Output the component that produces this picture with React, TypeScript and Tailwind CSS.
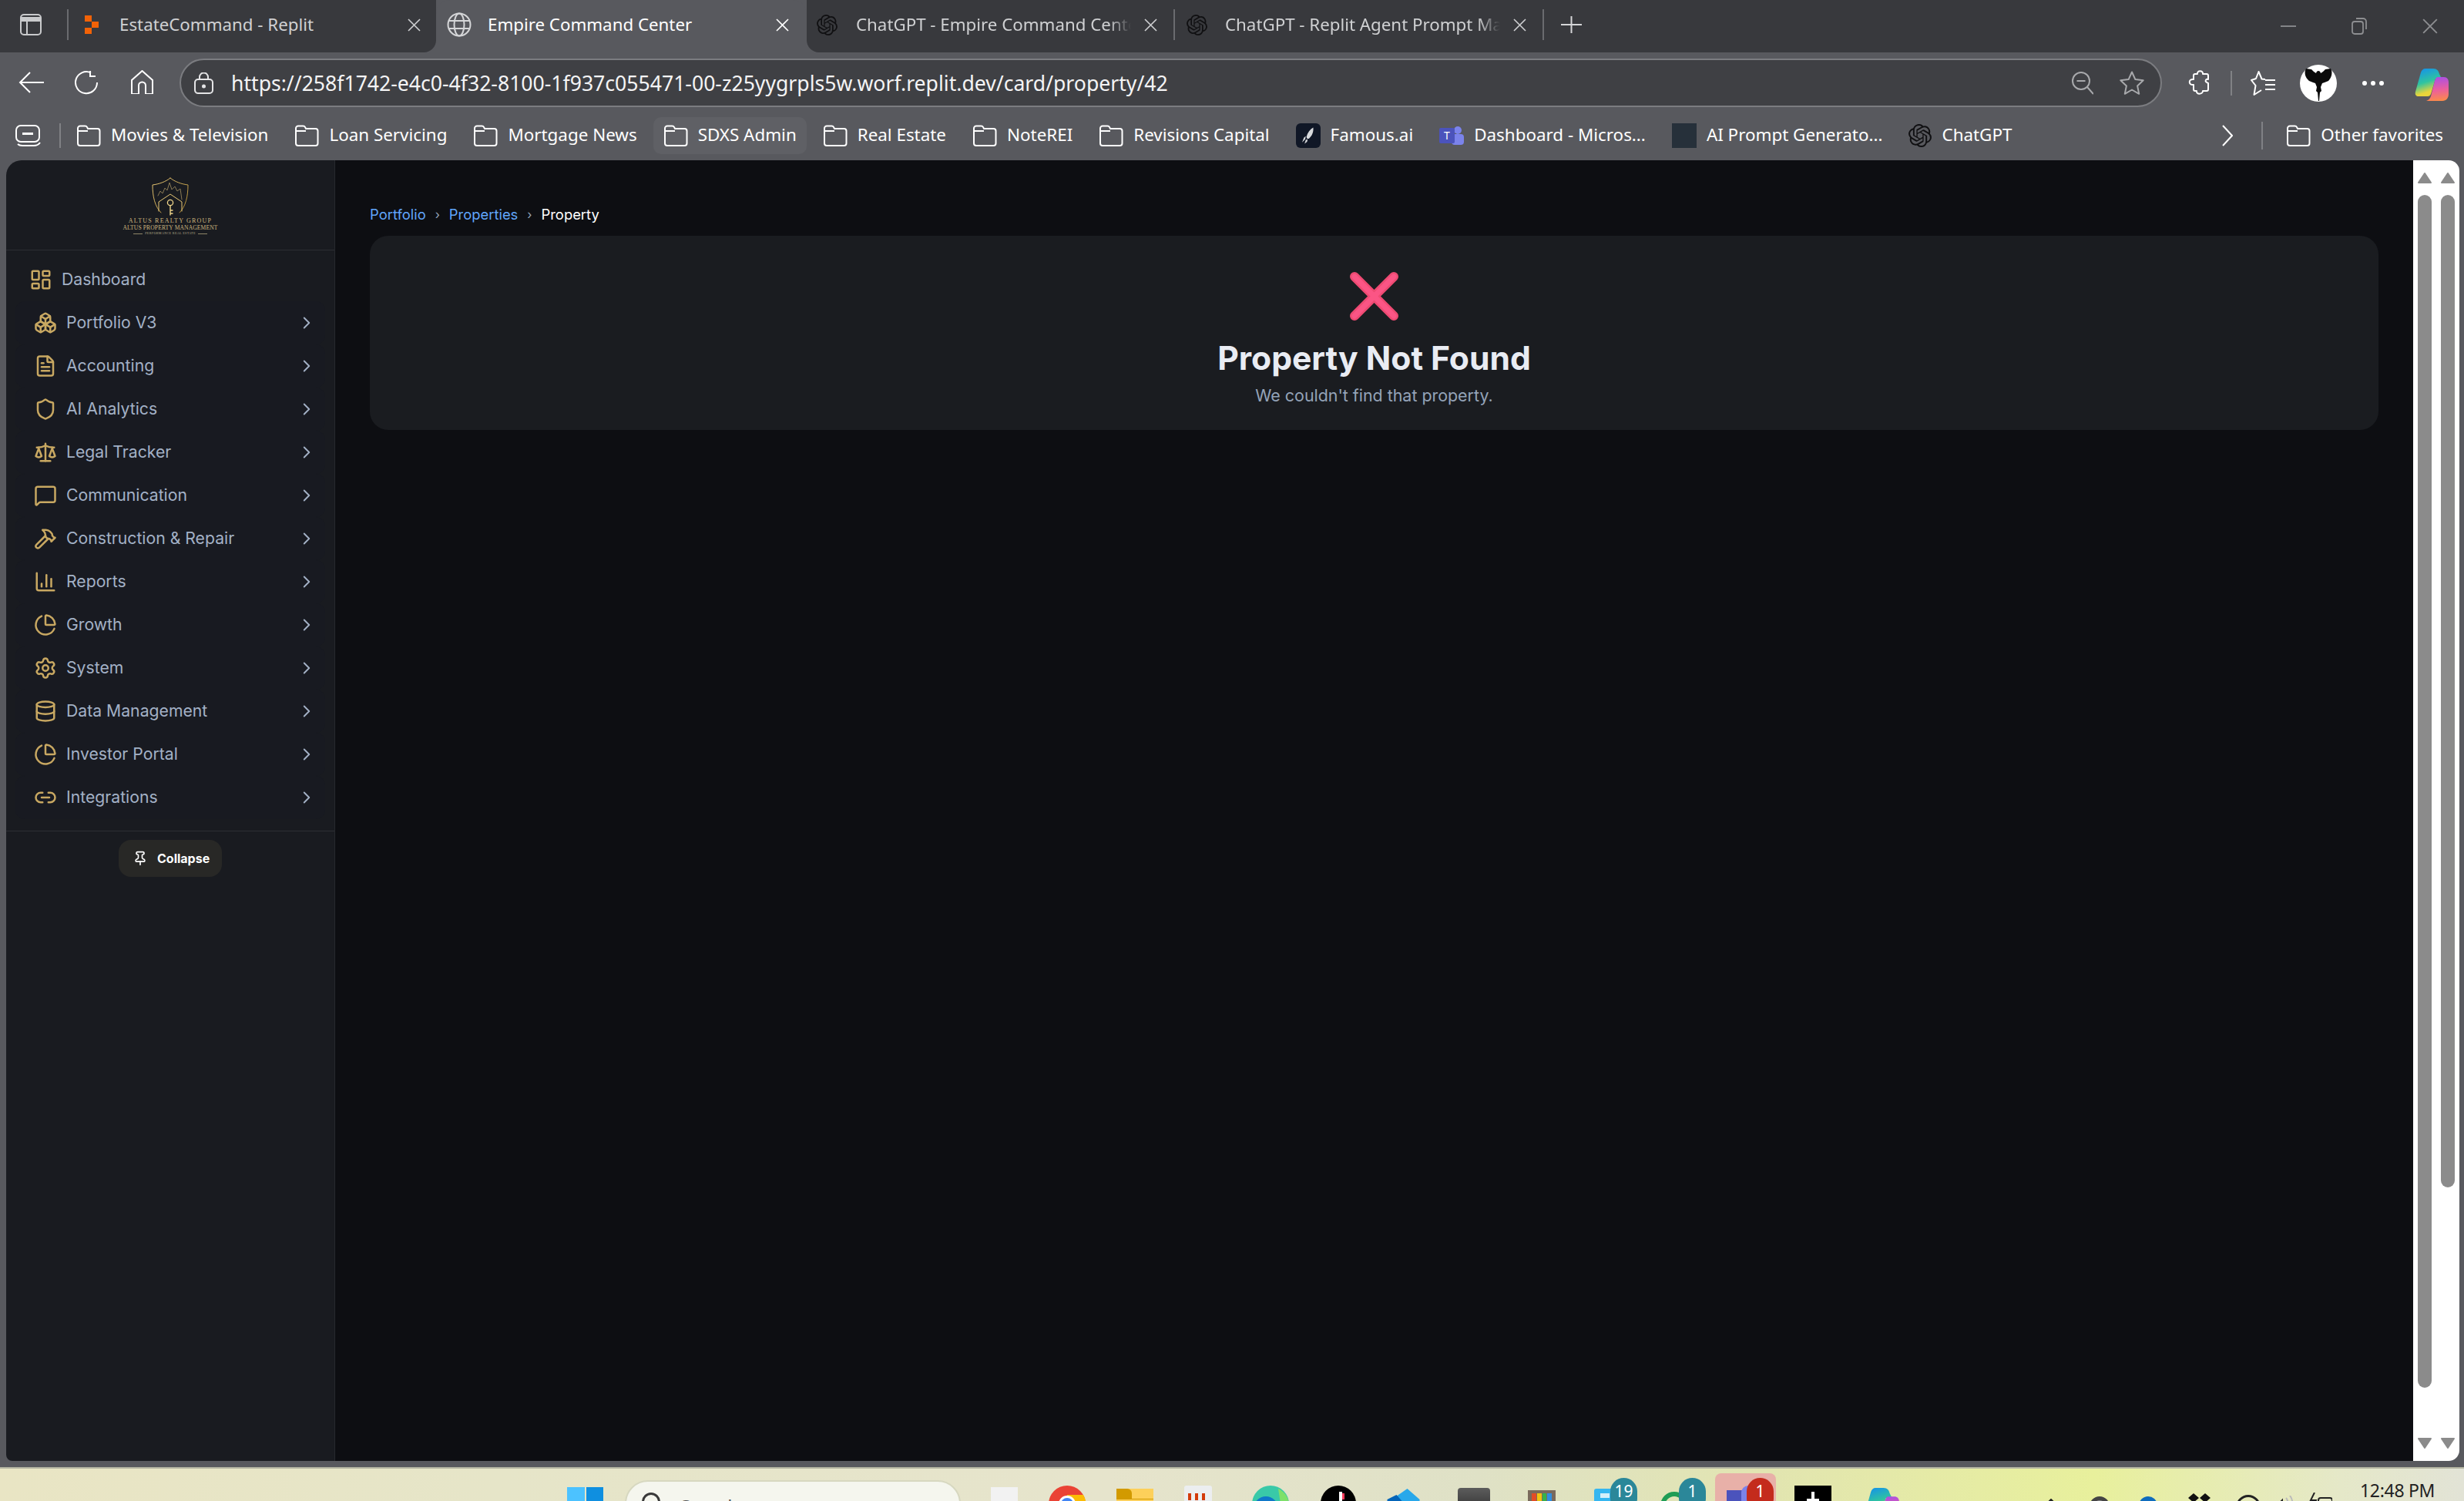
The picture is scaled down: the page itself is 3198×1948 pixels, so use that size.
import React from 'react';
import {
  LayoutDashboard, Boxes, FileText, Shield, Scale, MessageSquare, Hammer, ChartColumn,
  ChartPie, Settings, Database, Link2, ChevronRight, Pin,
} from 'lucide-react';
import { SiOpenai } from 'react-icons/si';

const uiFont = "font-['Noto_Sans',sans-serif]";

const navItems = [
  { label: 'Portfolio V3', icon: Boxes },
  { label: 'Accounting', icon: FileText },
  { label: 'AI Analytics', icon: Shield },
  { label: 'Legal Tracker', icon: Scale },
  { label: 'Communication', icon: MessageSquare },
  { label: 'Construction & Repair', icon: Hammer },
  { label: 'Reports', icon: ChartColumn },
  { label: 'Growth', icon: ChartPie },
  { label: 'System', icon: Settings },
  { label: 'Data Management', icon: Database },
  { label: 'Investor Portal', icon: ChartPie },
  { label: 'Integrations', icon: Link2 },
];

const CloseGlyph = ({ className = '' }: { className?: string }) => (
  <svg viewBox="0 0 17 17" className={className} fill="none" stroke="currentColor" strokeWidth="1.6">
    <path d="M1 1l15 15M16 1L1 16" />
  </svg>
);

const FolderIcon = () => (
  <svg viewBox="0 0 32 28" className="w-[32px] h-[28px] shrink-0" fill="none" stroke="#fff" strokeWidth="2">
    <path d="M2 24V4.5A3 3 0 0 1 5 1.5h6.5a3 3 0 0 1 2.6 1.6L15 5h12.5a3 3 0 0 1 3 3v16a3 3 0 0 1-3 3H5a3 3 0 0 1-3-3Z" />
    <path d="M2 8h13" />
  </svg>
);

const CopilotLogo = ({ className = '' }: { className?: string }) => (
  <svg viewBox="0 0 44 44" className={className}>
    <defs>
      <linearGradient id="cpA" x1="0.2" y1="0" x2="0.5" y2="1">
        <stop offset="0" stopColor="#1592ea" />
        <stop offset="0.5" stopColor="#2fc4a0" />
        <stop offset="0.85" stopColor="#e8d53b" />
      </linearGradient>
      <linearGradient id="cpB" x1="0.4" y1="0" x2="0.5" y2="1">
        <stop offset="0" stopColor="#a94fe6" />
        <stop offset="0.55" stopColor="#ec5f9c" />
        <stop offset="1" stopColor="#fb8a4b" />
      </linearGradient>
    </defs>
    <path d="M14 1h10c5 0 7 3 8 7l3 6H27l-6 20c-1 2-2 3-4 3H5c-3 0-5-2-4-6L8 6c1-3 3-5 6-5Z" fill="url(#cpA)" />
    <path d="M30 12h8c4 0 6 3 6 7v15c0 5-3 9-8 9H15c3-1 5-3 6-6l5-20c1-3 2-5 4-5Z" fill="url(#cpB)" />
  </svg>
);

const Bookmark = ({ label, icon, hover }: { label: string; icon?: React.ReactNode; hover?: boolean }) => (
  <div className={`relative flex items-center gap-[13px] h-[48px] ${hover ? 'before:absolute before:content-[""] before:-inset-x-[13px] before:inset-y-0 before:rounded-[10px] before:bg-[#5f6065]' : ''}`}>
    <span className="relative flex items-center">{icon ?? <FolderIcon />}</span>
    <span className="relative -mt-[2px] text-[22.4px] text-white whitespace-nowrap leading-none">{label}</span>
  </div>
);

function TabStrip() {
  return (
    <div className={`flex h-[68px] bg-[#58595e] text-[22.3px] ${uiFont}`}>
      <div className="flex items-center w-[566px] pb-[4px] bg-[#38393d] rounded-br-[16px] text-[#cfd0d2]">
        <svg viewBox="0 0 28 28" className="ml-[26px] w-[28px] h-[28px]" fill="none" stroke="#c9cacc" strokeWidth="2">
          <rect x="1" y="1" width="26" height="26" rx="4" />
          <path d="M1 7h26" strokeWidth="6" />
          <path d="M9 8v19" />
        </svg>
        <div className="ml-[33px] w-[2px] h-[40px] bg-[#6a6b6f]" />
        <svg viewBox="0 0 18 24" className="ml-[21px] w-[18px] h-[24px]" fill="#f26207">
          <path d="M0 0h9v8H0zM9 8h9v8H9zM0 16h9v8H0z" />
        </svg>
        <span className="ml-[27px] w-[374px] whitespace-nowrap">EstateCommand - Replit</span>
        <CloseGlyph className="w-[17px] h-[17px] text-[#cfd0d2]" />
      </div>
      <div className="flex items-center w-[481px] pb-[4px] bg-[#58595e] rounded-t-[18px] text-white">
        <svg viewBox="0 0 32 32" className="ml-[14px] w-[32px] h-[32px]" fill="none" stroke="#d5d6d8" strokeWidth="2">
          <circle cx="16" cy="16" r="14.5" />
          <ellipse cx="16" cy="16" rx="6.5" ry="14.5" />
          <path d="M2.5 11h27M2.5 21h27" />
        </svg>
        <span className="ml-[21px] w-[374px] whitespace-nowrap">Empire Command Center</span>
        <CloseGlyph className="w-[17px] h-[17px] text-white" />
      </div>
      <div className="flex flex-1 items-center pb-[4px] bg-[#38393d] rounded-bl-[16px] text-[#cfd0d2]">
        <SiOpenai className="ml-[13px] w-[27px] h-[27px] text-[#101012] shrink-0" />
        <span className="ml-[24px] w-[357px] overflow-hidden whitespace-nowrap [mask-image:linear-gradient(to_right,black_92%,transparent)]">ChatGPT - Empire Command Center</span>
        <CloseGlyph className="ml-[17px] w-[17px] h-[17px] text-[#cfd0d2]" />
        <div className="ml-[21px] w-[2px] h-[40px] bg-[#6a6b6f]" />
        <SiOpenai className="ml-[15px] w-[27px] h-[27px] text-[#101012] shrink-0" />
        <span className="ml-[23px] w-[357px] overflow-hidden whitespace-nowrap [mask-image:linear-gradient(to_right,black_92%,transparent)]">ChatGPT - Replit Agent Prompt Maker</span>
        <CloseGlyph className="ml-[17px] w-[17px] h-[17px] text-[#cfd0d2]" />
        <div className="ml-[21px] w-[2px] h-[40px] bg-[#6a6b6f]" />
        <svg viewBox="0 0 27 22" className="ml-[22px] w-[27px] h-[22px]" fill="none" stroke="#d5d6d8" strokeWidth="2">
          <path d="M13.5 0v22M0 11h27" />
        </svg>
        <svg viewBox="0 0 20 20" className="ml-auto mt-[4px] w-[20px] h-[20px] text-[#8d8e91]" fill="none" stroke="currentColor" strokeWidth="1.8">
          <path d="M0 10h20" />
        </svg>
        <svg viewBox="0 0 20 22" className="ml-[72px] mt-[4px] w-[20px] h-[22px]" fill="none" stroke="#8d8e91" strokeWidth="1.8">
          <rect x="1" y="5" width="14" height="16" rx="3" />
          <path d="M6 1h9a4 4 0 0 1 4 4v10" />
        </svg>
        <CloseGlyph className="ml-[72px] mr-[34px] mt-[4px] w-[20px] h-[20px] text-[#8d8e91]" />
      </div>
    </div>
  );
}

function Toolbar() {
  return (
    <div className={`flex items-start h-[72px] pt-[8px] bg-[#58595e] ${uiFont}`}>
      <svg viewBox="0 0 33 28" className="ml-[24px] mt-[17px] w-[33px] h-[28px]" fill="none" stroke="#fff" strokeWidth="2">
        <path d="M33 14H2M15 1 2 14l13 13" />
      </svg>
      <svg viewBox="0 0 32 32" className="ml-[39px] mt-[15px] w-[32px] h-[32px]" fill="none" stroke="#fff" strokeWidth="2">
        <path d="M22 3.5A14 14 0 1 0 30 16" />
        <path d="M21 1v7h7" />
      </svg>
      <svg viewBox="0 0 31 31" className="ml-[41px] mt-[15px] w-[31px] h-[31px]" fill="none" stroke="#fff" strokeWidth="2">
        <path d="M15.5 1 2 13v18h9V20a4.5 4.5 0 0 1 9 0v11h9V13L15.5 1Z" />
      </svg>
      <div className="flex items-center ml-[33px] w-[2573px] h-[63px] rounded-full border-2 border-[#7b7c80] bg-[#3f4044]">
        <svg viewBox="0 0 25 28" className="ml-[17px] w-[25px] h-[28px]" fill="none" stroke="#e4e4e6" strokeWidth="2">
          <rect x="1" y="9" width="23" height="18" rx="4" />
          <path d="M7 9V6a5.5 5.5 0 0 1 11 0v3" />
          <circle cx="12.5" cy="18" r="1.5" fill="#e4e4e6" />
        </svg>
        <span className="ml-[23px] pt-[1px] text-[26.6px] leading-none text-[#f4f4f5] whitespace-nowrap">
          https://258f1742-e4c0-4f32-8100-1f937c055471-00-z25yygrpls5w.worf.replit.dev/card/property/42
        </span>
        <svg viewBox="0 0 28 30" className="ml-auto w-[28px] h-[30px]" fill="none" stroke="#a8a9ac" strokeWidth="2">
          <circle cx="12" cy="12" r="11" />
          <path d="M6.5 12h11M20 20l8 9" />
        </svg>
        <svg viewBox="0 0 32 32" className="ml-[34px] mr-[21px] w-[32px] h-[32px]" fill="none" stroke="#a8a9ac" strokeWidth="2" strokeLinejoin="round">
          <path d="m16 1.5 4.4 9.6 10.3 1.2-7.6 7.1 2.1 10.4-9.2-5.3-9.2 5.3 2.1-10.4L1.3 12.3l10.3-1.2L16 1.5Z" />
        </svg>
      </div>
      <svg viewBox="0 0 28 34" className="ml-[34px] mt-[14px] w-[28px] h-[34px]" fill="none" stroke="#fff" strokeWidth="2" strokeLinejoin="round">
        <path d="M9 6h3c-1-5 8-5 7 0h5a2 2 0 0 1 2 2v5c-3-1-4 2-3 3s3 2 3 2v8a2 2 0 0 1-2 2h-5c0 5-9 5-8 0H9a2 2 0 0 1-2-2v-6c-7 1-7-8 0-7V8a2 2 0 0 1 2-2Z" />
      </svg>
      <div className="ml-[27px] mt-[16px] w-[2px] h-[32px] bg-[#808185]" />
      <svg viewBox="0 0 33 34" className="ml-[24px] mt-[14px] w-[33px] h-[34px]" fill="none" stroke="#fff" strokeWidth="2" strokeLinejoin="round">
        <path d="M19 13 14.5 12.5 10.5 3 7 12 1 14 6.5 21 4.5 33 14 27" />
        <path d="M19 14h13M19 20h13M19 26h13" />
      </svg>
      <div className="flex items-center justify-center ml-[31px] mt-[8px] w-[48px] h-[48px] rounded-full bg-white">
        <svg viewBox="0 0 48 48" className="w-[48px] h-[48px]" fill="#0a0a0a">
          <path d="M24 8c1.500 0 2.500 1 3 3l3-2 3-3 7-1c3 5 1 12-3 16l-5 2-3 1-2 5 1 5-2 2-1 11-1 0-1-11-2-2 1-5-2-5-3-1-5-2C7 17 5 10 8 5l7 1 3 3 3 2c.5-2 1.500-3 3-3Z" />
        </svg>
      </div>
      <div className="flex items-center gap-[5px] ml-[33px] mt-[29px]">
        <span className="w-[6px] h-[6px] rounded-full bg-white" />
        <span className="w-[6px] h-[6px] rounded-full bg-white" />
        <span className="w-[6px] h-[6px] rounded-full bg-white" />
      </div>
      <CopilotLogo className="ml-[40px] mt-[12px] w-[44px] h-[44px]" />
    </div>
  );
}

function BookmarksBar() {
  return (
    <div className={`flex items-center h-[68px] pt-[4px] bg-[#58595e] ${uiFont}`}>
      <svg viewBox="0 0 33 28" className="ml-[20px] w-[33px] h-[28px]" fill="none" stroke="#fff" strokeWidth="2">
        <rect x="1" y="1" width="30" height="21" rx="6" />
        <path d="M9 11.5h14" strokeWidth="3" />
        <path d="M3 25c2 2 3 2 6 2h15c3 0 6-1 8-4" />
      </svg>
      <div className="ml-[24px] w-[2px] h-[32px] bg-[#808185]" />
      <div className="flex items-center gap-[34px] ml-[20px]">
        <Bookmark label="Movies & Television" />
        <Bookmark label="Loan Servicing" />
        <Bookmark label="Mortgage News" />
        <Bookmark label="SDXS Admin" hover />
        <Bookmark label="Real Estate" />
        <Bookmark label="NoteREI" />
        <Bookmark label="Revisions Capital" />
        <Bookmark
          label="Famous.ai"
          icon={
            <span className="flex items-center justify-center w-[32px] h-[32px] rounded-[6px] bg-[#101726]">
              <svg viewBox="0 0 20 26" className="w-[16px] h-[24px]" fill="#d8dadd">
                <path d="M18 0c1 7-2 14-7 18l-3 0-1-3C9 8 13 3 18 0ZM6 14l-1 5-5 5 3-8 3-2ZM9 19l-1 4-4 3 2-6 3-1Z" />
              </svg>
            </span>
          }
        />
        <Bookmark
          label="Dashboard - Micros..."
          icon={
            <svg viewBox="0 0 32 30" className="w-[32px] h-[30px]">
              <circle cx="24" cy="8" r="5" fill="#7b83eb" />
              <rect x="16" y="13" width="16" height="14" rx="4" fill="#7b83eb" />
              <rect x="0" y="5" width="20" height="20" rx="2" fill="#4b53bc" />
              <text x="10" y="20" textAnchor="middle" fontSize="14" fill="#fff" fontFamily="Noto Sans">T</text>
            </svg>
          }
        />
        <Bookmark label="AI Prompt Generato..." icon={<span className="block w-[32px] h-[32px] bg-[#26303a]" />} />
        <Bookmark label="ChatGPT" icon={<SiOpenai className="w-[30px] h-[30px] text-[#101012]" />} />
      </div>
      <svg viewBox="0 0 14 28" className="ml-auto w-[14px] h-[28px]" fill="none" stroke="#fff" strokeWidth="2">
        <path d="m1 1 12 13L1 27" />
      </svg>
      <div className="ml-[37px] w-[2px] h-[36px] bg-[#808185]" />
      <div className="ml-[30px] mr-[27px]">
        <Bookmark label="Other favorites" />
      </div>
    </div>
  );
}

const LogoMark = () => (
  <svg viewBox="0 0 48 50" className="w-[48px] h-[50px]" fill="none" strokeLinecap="round">
    <defs>
      <linearGradient id="goldGrad" x1="0" y1="0" x2="1" y2="1">
        <stop offset="0" stopColor="#e8c877" />
        <stop offset="1" stopColor="#a8842f" />
      </linearGradient>
    </defs>
    <path d="M24 1C18 6 9 9 1 10c0 15 3 28 11 36M24 1c6 5 15 8 23 9 0 15-3 28-11 36" stroke="url(#goldGrad)" strokeWidth="1" />
    <path d="M8 24l3-6 3 3 3-7 3 3 3-10 3 9 4-4 3 6 4-3 2 14" stroke="#8a7a55" strokeWidth="1" />
    <path d="M9 44V32l15-10 15 10v12" stroke="#e8c877" strokeWidth="1" />
    <circle cx="24" cy="33" r="3.6" stroke="#f0d68a" strokeWidth="1.3" />
    <path d="M24 37v12M24 43h3M24 47h3" stroke="#f0d68a" strokeWidth="1.4" />
  </svg>
);

function Sidebar() {
  return (
    <aside className="flex flex-col w-[427px] shrink-0 h-full bg-[#191b20] border-r border-[#26282d] rounded-tl-[20px] rounded-bl-[8px] font-['Inter',sans-serif]">
      <div className="flex flex-col items-center h-[117px] pt-[22px] border-b border-[#2c2e33]">
        <LogoMark />
        <span className="mt-[2px] font-['Liberation_Serif',serif] text-[8px] leading-[9px] tracking-[1.2px] text-[#cdb67e] whitespace-nowrap">ALTUS REALTY GROUP</span>
        <span className="font-['Liberation_Serif',serif] text-[7.6px] leading-[9px] tracking-[0.1px] text-[#c9b47f] whitespace-nowrap">ALTUS PROPERTY MANAGEMENT</span>
        <div className="flex items-center gap-[3px]">
          <span className="w-[12px] h-px bg-[#8f8668]" />
          <span className="font-['Liberation_Serif',serif] text-[4.2px] leading-[6px] tracking-[0.3px] text-[#b5ab8b] whitespace-nowrap">PERFORMANCE REAL ESTATE</span>
          <span className="w-[12px] h-px bg-[#8f8668]" />
        </div>
      </div>
      <nav className="flex flex-col pt-[10px] pb-[15px] mx-[12px]">
        <div className="flex items-center gap-[12px] h-[56px] pl-[18px]">
          <LayoutDashboard className="w-[30px] h-[30px] text-[#c8a862]" strokeWidth={2} />
          <span className="text-[21.2px] text-[#a3b1c6]">Dashboard</span>
        </div>
        {navItems.map(({ label, icon: Icon }) => (
          <div key={label} className="flex items-center gap-[12px] h-[56px] pl-[24px] pr-[11px] rounded-[12px] bg-[#181a21]">
            <Icon className="w-[30px] h-[30px] text-[#c8a862]" strokeWidth={2} />
            <span className="text-[21.2px] text-[#a3b1c6]">{label}</span>
            <ChevronRight className="ml-auto w-[26px] h-[26px] text-[#a3b1c6]" strokeWidth={1.75} />
          </div>
        ))}
      </nav>
      <div className="flex justify-center pt-[11px] border-t border-[#2c2e33]">
        <button className="flex items-center gap-[12px] w-[134px] h-[48px] pl-[18px] rounded-[16px] bg-[#282826] text-[16px] font-bold text-white">
          <Pin className="w-[20px] h-[20px]" strokeWidth={2} />
          Collapse
        </button>
      </div>
    </aside>
  );
}

function PageContent() {
  return (
    <main className="flex-1 min-w-0 h-full px-[45px] pt-[58px] bg-[#0d0e12] font-['Inter',sans-serif]">
      <div className="flex items-center gap-[12px] h-[24px] text-[18.4px] leading-none">
        <span className="text-[#60a5fa]">Portfolio</span>
        <span className="text-[#94a3b8] text-[16px]">›</span>
        <span className="text-[#60a5fa]">Properties</span>
        <span className="text-[#94a3b8] text-[16px]">›</span>
        <span className="text-white">Property</span>
      </div>
      <div className="flex flex-col items-center h-[252px] mt-[16px] pt-[47px] rounded-[24px] bg-[#1a1c20]">
        <svg viewBox="0 0 63 63" className="w-[63px] h-[63px]" fill="none" strokeLinecap="round">
          <path d="M6 6l51 51M57 6 6 57" stroke="#ee4a72" strokeWidth="12" />
          <path d="M6 6l51 51M57 6 6 57" stroke="#fb5585" strokeWidth="7" />
        </svg>
        <h1 className="mt-[21px] text-[42.6px] leading-[56px] font-bold text-[#e9ecf3]">Property Not Found</h1>
        <p className="mt-[4px] text-[21.4px] leading-[32px] text-[#94a3b8]">We couldn't find that property.</p>
      </div>
    </main>
  );
}

const Arrow = ({ down }: { down?: boolean }) => (
  <svg viewBox="0 0 18 14" className={`w-[18px] h-[14px] ${down ? 'rotate-180' : ''}`} fill="#8b8b8b" stroke="#8b8b8b" strokeWidth="2" strokeLinejoin="round">
    <path d="M9 1 1 13h16L9 1Z" />
  </svg>
);

function Scrollbars() {
  return (
    <div className="flex justify-center gap-[12px] w-[60px] h-full shrink-0 pt-[16px] pb-[16px] bg-white rounded-r-[14px]">
      <div className="flex flex-col items-center w-[18px] h-full">
        <Arrow />
        <div className="mt-[15px] w-[18px] h-[1548px] rounded-full bg-[#8b8b8b]" />
        <div className="mt-auto"><Arrow down /></div>
      </div>
      <div className="flex flex-col items-center w-[18px] h-full">
        <Arrow />
        <div className="mt-[15px] w-[18px] h-[1288px] rounded-full bg-[#8b8b8b]" />
        <div className="mt-auto"><Arrow down /></div>
      </div>
    </div>
  );
}

const Badge = ({ text, className }: { text: string; className: string }) => (
  <span className={`absolute top-0 flex items-start justify-center pt-[7px] w-[35px] h-[44px] rounded-full text-[21px] text-white leading-none ${className}`}>{text}</span>
);

function Taskbar() {
  return (
    <div className={`relative flex items-start h-[44px] overflow-hidden border-t-2 border-[#b4b5a2] bg-[linear-gradient(90deg,#e9e5c4_0%,#e6e5c8_20%,#e6e4cc_45%,#dfe1c6_60%,#e2e5b0_72%,#e8f09c_85%,#e5e8c8_95%,#e2e3d6_100%)] ${uiFont}`}>
      <div className="ml-[736px] mt-[24px] flex gap-[2px] shrink-0">
        <span className="w-[23px] h-[46px] bg-[#4cc2ff]" />
        <span className="w-[22px] h-[46px] bg-[#0f8fe0]" />
      </div>
      <div className="flex items-start ml-[28px] mt-[15px] w-[436px] h-[60px] shrink-0 rounded-t-[30px] border-2 border-[#d7d8c0] bg-[#f5f6ee]">
        <span className="ml-[20px] mt-[14px] w-[24px] h-[24px] rounded-full border-[3px] border-[#3a3a3a]" />
        <span className="ml-[26px] mt-[20px] text-[24px] leading-none text-[#555]">Search</span>
      </div>
      <div className="relative ml-[27px] mt-[24px] w-[47px] h-[30px] shrink-0">
        <span className="absolute left-[12px] top-0 w-[35px] h-[30px] bg-[#f2f2f2]" />
        <span className="absolute left-0 top-[19px] w-[36px] h-[12px] bg-[#404040]" />
        <span className="absolute left-[12px] top-[19px] w-[24px] h-[12px] bg-[#c4c4c4]" />
      </div>
      <svg viewBox="0 0 48 48" className="ml-[40px] mt-[22px] w-[48px] h-[48px] shrink-0">
        <circle cx="24" cy="24" r="24" fill="#ea4335" />
        <path d="M24 24 45 36A24 24 0 0 1 12 45Z" fill="#34a853" />
        <path d="M24 12h21a24 24 0 0 1 0 24L24 24Z" fill="#fbbc05" />
        <circle cx="24" cy="24" r="11" fill="#fff" />
        <circle cx="24" cy="24" r="8" fill="#4285f4" />
      </svg>
      <div className="relative ml-[40px] mt-[26px] w-[48px] h-[30px] shrink-0 bg-[#fdd05a]">
        <span className="absolute left-0 top-0 w-[20px] h-[14px] rounded-tr-[6px] bg-[#d29a00]" />
        <span className="absolute left-0 top-[13px] w-full h-px bg-[#d29a00]" />
      </div>
      <div className="relative ml-[40px] mt-[22px] w-[36px] h-[40px] shrink-0 rounded-[3px] bg-[#eceef0]">
        <span className="absolute left-[5px] top-[10px] w-[4px] h-[9px] bg-[#d33b0b]" />
        <span className="absolute left-[14px] top-[10px] w-[4px] h-[9px] bg-[#d33b0b]" />
        <span className="absolute left-[23px] top-[10px] w-[4px] h-[9px] bg-[#d33b0b]" />
        <span className="absolute left-[5px] top-[26px] w-[4px] h-[9px] bg-[#d33b0b]" />
        <span className="absolute left-[26px] top-[22px] w-[6px] h-[18px] bg-[#a8a8a8]" />
      </div>
      <svg viewBox="0 0 48 48" className="ml-[52px] mt-[22px] w-[48px] h-[48px] shrink-0">
        <circle cx="24" cy="24" r="24" fill="#39c9a8" />
        <circle cx="18" cy="30" r="16" fill="#0f78c9" />
        <path d="M34 4a24 24 0 0 1 14 20l-10 6Z" fill="#7fe06a" />
      </svg>
      <div className="relative ml-[41px] mt-[22px] w-[46px] h-[46px] shrink-0 rounded-full bg-black">
        <span className="absolute left-[24px] top-[8px] w-[4px] h-[16px] bg-white" />
        <span className="absolute left-[28px] top-[10px] w-[3px] h-[8px] bg-[#ff3b5c]" />
      </div>
      <svg viewBox="0 0 48 24" className="ml-[40px] mt-[26px] w-[49px] h-[24px] shrink-0">
        <path d="M26 0 42 14v10H6V14Z" fill="#28a8ea" />
        <path d="M0 14 12 8l14 16H0Z" fill="#0364b8" />
        <circle cx="14" cy="21" r="3" fill="#fff" />
      </svg>
      <span className="ml-[43px] mt-[25px] w-[42px] h-[30px] shrink-0 rounded-t-[4px] bg-[linear-gradient(180deg,#5c5c5c,#333)]" />
      <div className="flex gap-[1px] ml-[49px] mt-[28px] w-[36px] h-[30px] shrink-0 px-[5px] pt-[4px] bg-[#7a6a5c]">
        <span className="flex-1 bg-[#e34c26]" />
        <span className="flex-1 bg-[#f2c40f]" />
        <span className="flex-1 bg-[#35b34a]" />
        <span className="flex-1 bg-[#2f8fe0]" />
      </div>
      <div className="relative ml-[50px] mt-[12px] w-[56px] h-[40px] shrink-0">
        <span className="absolute left-0 top-[14px] w-[31px] h-[30px] rounded-t-[3px] bg-[#35b6f0]" />
        <span className="absolute left-[8px] top-[20px] w-[12px] h-[6px] bg-[#d5effa]" />
        <Badge text="19" className="left-[21px] bg-[#2b8799]" />
      </div>
      <div className="relative ml-[30px] mt-[12px] w-[56px] h-[40px] shrink-0">
        <span className="absolute left-0 top-[18px] w-[36px] h-[36px] rounded-full border-[6px] border-[#1f9d55]" />
        <Badge text="1" className="left-[24px] bg-[#2b8799]" />
      </div>
      <div className="relative ml-[15px] mt-[6px] w-[79px] h-[44px] shrink-0 rounded-t-[8px] bg-[#e8b0a8]">
        <span className="absolute left-[15px] top-[22px] w-[26px] h-[24px] bg-[#4b53bc]" />
        <span className="absolute left-[34px] top-[16px] w-[18px] h-[30px] rounded-t-[9px] bg-[#7b83eb]" />
        <Badge text="1" className="left-[41px] mt-[6px] bg-[#c42b1c]" />
      </div>
      <div className="relative ml-[24px] mt-[22px] w-[48px] h-[40px] shrink-0 bg-black">
        <span className="absolute left-[22px] top-[8px] w-[4px] h-[20px] bg-white" />
        <span className="absolute left-[16px] top-[17px] w-[16px] h-[14px] bg-white" />
      </div>
      <CopilotLogo className="ml-[43px] mt-[24px] w-[45px] h-[45px] shrink-0" />
      <div className="flex items-start ml-[190px] mt-[33px] shrink-0">
        <svg viewBox="0 0 14 8" className="mt-[6px] w-[14px] h-[8px]" fill="none" stroke="#222" strokeWidth="2"><path d="m1 7 6-6 6 6" /></svg>
        <span className="ml-[43px] mt-[3px] w-[26px] h-[26px] rounded-full border-[5px] border-[#444] bg-[#888]" />
        <span className="ml-[38px] mt-[3px] w-[24px] h-[24px] rounded-full bg-[#0f6cbd]" />
        <svg viewBox="0 0 30 12" className="ml-[39px] mt-[-1px] w-[30px] h-[12px]" fill="#111"><path d="m8 0 7 6-7 6-7-6ZM23 0l7 6-7 6-7-6Z" /></svg>
        <span className="ml-[33px] mt-[1px] w-[32px] h-[32px] rounded-full border-[3px] border-[#222]" />
        <svg viewBox="0 0 30 20" className="ml-[14px] mt-[2px] w-[30px] h-[20px]" fill="none" stroke="#222" strokeWidth="2"><path d="M0 14h6l8-8v14" /><path d="M19 3c3 3 3 9 3 12M24 0c3 4 4 10 3 15" stroke="#bbb" /></svg>
        <svg viewBox="0 0 30 20" className="ml-[19px] mt-[-2px] w-[30px] h-[20px]" fill="none" stroke="#222" strokeWidth="2"><path d="M7 0 2 10h7l-3 10" /><rect x="12" y="7" width="18" height="14" rx="3" /></svg>
      </div>
      <span className="absolute left-[3063px] top-[17px] text-[23px] leading-none text-[#222] tracking-[-0.3px] whitespace-nowrap">12:48 PM</span>
    </div>
  );
}

export default function App() {
  return (
    <div className="flex flex-col w-[3198px] h-[1948px] overflow-hidden bg-[#58595e]">
      <TabStrip />
      <Toolbar />
      <BookmarksBar />
      <div className="flex h-[1688px] pl-[8px] pr-[6px]">
        <Sidebar />
        <PageContent />
        <Scrollbars />
      </div>
      <div className="h-[8px] shrink-0" />
      <Taskbar />
    </div>
  );
}
